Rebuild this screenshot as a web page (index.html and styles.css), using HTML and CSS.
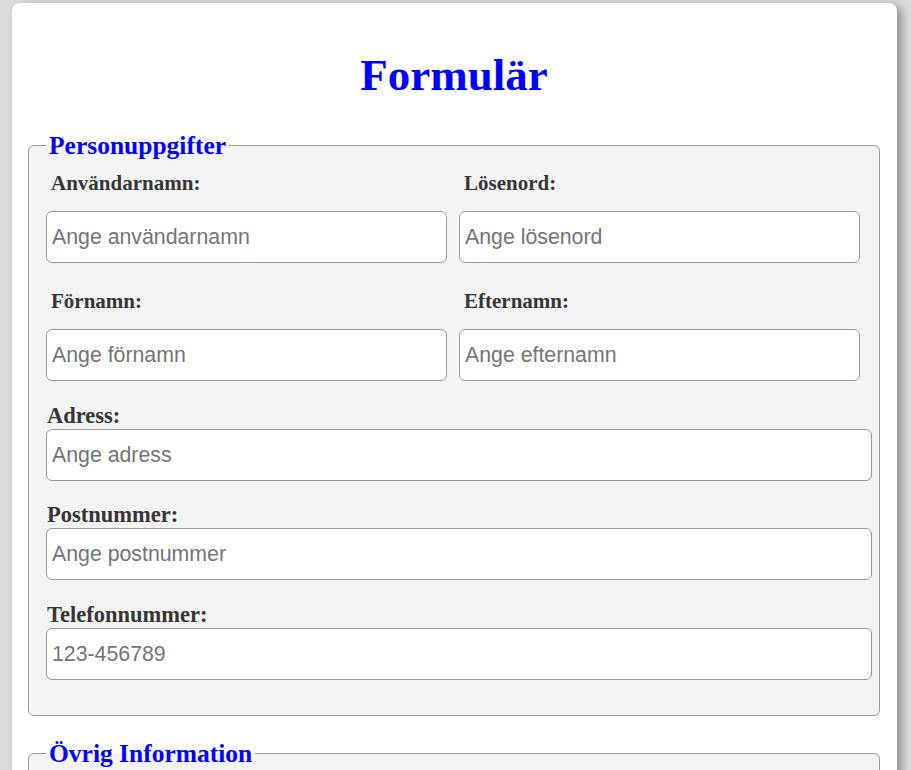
FILE: index.html
```html
<!DOCTYPE html>
<html lang="sv">
<head>
<meta charset="utf-8">
<title>Formulär</title>
<link rel="stylesheet" href="styles.css">
</head>
<body>
<div class="card">
  <h1 class="title">Formulär</h1>
  <form>
    <fieldset class="group">
      <legend class="group-title">Personuppgifter</legend>
      <div class="pair">
        <div class="col">
          <label class="label label-half" for="user">Användarnamn:</label>
          <input class="field field-half" id="user" type="text" placeholder="Ange användarnamn">
        </div>
        <div class="col">
          <label class="label label-half" for="pass">Lösenord:</label>
          <input class="field field-half" id="pass" type="password" placeholder="Ange lösenord">
        </div>
      </div>
      <div class="pair pair-second">
        <div class="col">
          <label class="label label-half" for="fname">Förnamn:</label>
          <input class="field field-half" id="fname" type="text" placeholder="Ange förnamn">
        </div>
        <div class="col">
          <label class="label label-half" for="lname">Efternamn:</label>
          <input class="field field-half" id="lname" type="text" placeholder="Ange efternamn">
        </div>
      </div>
      <div class="single single-first">
        <label class="label label-full" for="addr">Adress:</label>
        <input class="field field-full" id="addr" type="text" placeholder="Ange adress">
      </div>
      <div class="single">
        <label class="label label-full" for="zip">Postnummer:</label>
        <input class="field field-full" id="zip" type="text" placeholder="Ange postnummer">
      </div>
      <div class="single single-last">
        <label class="label label-full" for="phone">Telefonnummer:</label>
        <input class="field field-full" id="phone" type="tel" placeholder="123-456789">
      </div>
    </fieldset>
    <fieldset class="group group-second">
      <legend class="group-title">Övrig Information</legend>
      <div class="spacer"></div>
    </fieldset>
  </form>
</div>
</body>
</html>
```
FILE: styles.css
```css
html, body {
  margin: 0;
  padding: 0;
}
body {
  background: #dcdcdc;
  font-family: "Liberation Serif", "Times New Roman", serif;
  padding: 3px 14px 40px 12px;
}
.card {
  background: #ffffff;
  border-radius: 8px;
  box-shadow: 5px 3px 10px rgba(0, 0, 0, 0.35);
  padding: 0 17px 30px 16px;
}
.title {
  margin: 0;
  padding: 46px 0 30px 0;
  text-align: center;
  color: #0000ff;
  font-size: 45px;
  line-height: 52px;
  font-weight: bold;
}
form {
  margin: 0;
}
.group {
  margin: 0;
  background: #f4f4f4;
  border: 1px solid #999999;
  border-radius: 6px;
  padding: 11px 7px 35px 17px;
}
.group-second {
  margin-top: 23px;
}
.group-title {
  color: #0000ff;
  font-weight: bold;
  font-size: 25.5px;
  line-height: 29px;
  padding: 0 3px;
}
.pair {
  display: grid;
  grid-template-columns: 1fr 1fr;
  column-gap: 12px;
  padding-right: 12px;
}
.pair-second {
  margin-top: 26px;
}
.label {
  display: block;
  color: #363636;
  font-weight: bold;
  line-height: 24px;
}
.label-half {
  font-size: 21px;
  padding-left: 5px;
  margin-bottom: 16px;
}
.label-full {
  font-size: 22.5px;
  padding-left: 1px;
  margin-bottom: 1px;
}
.field {
  display: block;
  box-sizing: border-box;
  width: 100%;
  height: 52px;
  margin: 0;
  padding: 0 5px;
  border: 1px solid #999999;
  border-radius: 6px;
  background: #ffffff;
  font-family: "Liberation Sans", Arial, sans-serif;
  font-size: 21.3px;
  color: #333333;
}
.field::placeholder {
  color: #757575;
  opacity: 1;
}
.single {
  margin-top: 22px;
}
.single-first {
  margin-top: 23px;
}
.single-last {
  margin-top: 23px;
}
.spacer {
  height: 120px;
}
```
